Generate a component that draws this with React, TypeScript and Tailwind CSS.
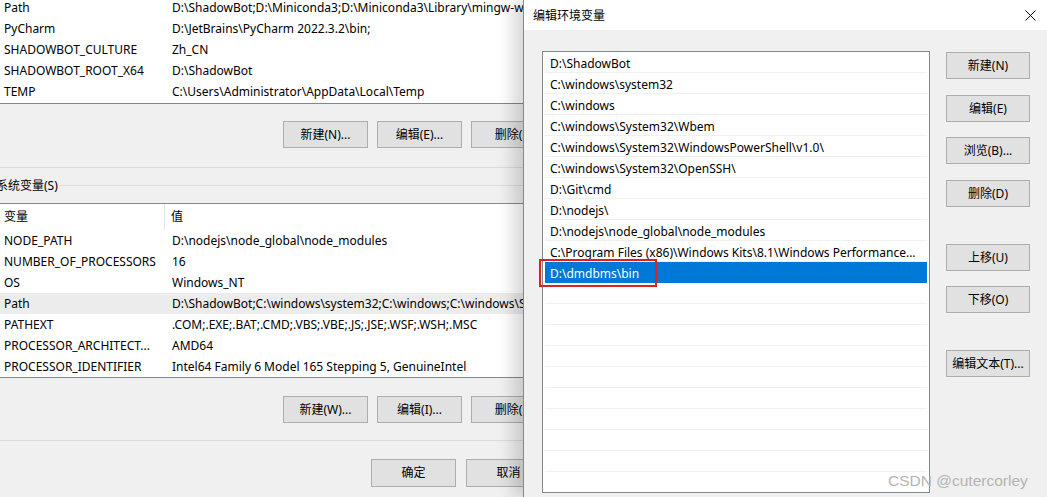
const userVars = [
  ['Path', 'D:\\ShadowBot;D:\\Miniconda3;D:\\Miniconda3\\Library\\mingw-w64\\bin;D:\\Miniconda3\\Library\\usr\\bin'],
  ['PyCharm', 'D:\\JetBrains\\PyCharm 2022.3.2\\bin;'],
  ['SHADOWBOT_CULTURE', 'Zh_CN'],
  ['SHADOWBOT_ROOT_X64', 'D:\\ShadowBot'],
  ['TEMP', 'C:\\Users\\Administrator\\AppData\\Local\\Temp'],
];

const sysVars = [
  ['NODE_PATH', 'D:\\nodejs\\node_global\\node_modules'],
  ['NUMBER_OF_PROCESSORS', '16'],
  ['OS', 'Windows_NT'],
  ['Path', 'D:\\ShadowBot;C:\\windows\\system32;C:\\windows;C:\\windows\\System32\\Wbem'],
  ['PATHEXT', '.COM;.EXE;.BAT;.CMD;.VBS;.VBE;.JS;.JSE;.WSF;.WSH;.MSC'],
  ['PROCESSOR_ARCHITECT...', 'AMD64'],
  ['PROCESSOR_IDENTIFIER', 'Intel64 Family 6 Model 165 Stepping 5, GenuineIntel'],
];

const paths = [
  'D:\\ShadowBot',
  'C:\\windows\\system32',
  'C:\\windows',
  'C:\\windows\\System32\\Wbem',
  'C:\\windows\\System32\\WindowsPowerShell\\v1.0\\',
  'C:\\windows\\System32\\OpenSSH\\',
  'D:\\Git\\cmd',
  'D:\\nodejs\\',
  'D:\\nodejs\\node_global\\node_modules',
  'C:\\Program Files (x86)\\Windows Kits\\8.1\\Windows Performance...',
  'D:\\dmdbms\\bin',
];

function Btn({ label, className = '' }: { label: string; className?: string }) {
  return (
    <div
      className={`h-[27px] shrink-0 flex items-center justify-center bg-[#e1e1e1] border border-[#adadad] text-[12px] text-black whitespace-nowrap ${className}`}
    >
      {label}
    </div>
  );
}

function VarRow({ name, value, hl = false }: { name: string; value: string; hl?: boolean }) {
  return (
    <div className={`h-[21px] flex items-center whitespace-nowrap ${hl ? 'bg-[#ececec]' : ''}`}>
      <div className="w-[172px] shrink-0 pl-[4px]">{name}</div>
      <div>{value}</div>
    </div>
  );
}

export default function App() {
  const rows = Array.from({ length: 22 }, (_, i) => paths[i] ?? '');

  return (
    <div
      className="w-[1047px] h-[497px] flex overflow-hidden bg-[#f0f0f0] text-[12px] text-black"
      style={{ fontFamily: '"Noto Sans", "Noto Sans CJK SC", sans-serif' }}
    >
      {/* Environment variables window (behind) */}
      <div className="w-[523px] shrink-0 flex flex-col overflow-hidden">
        <div className="h-[104px] shrink-0 bg-white border-b border-[#828790] overflow-hidden">
          <div className="-mt-[3px]">
            {userVars.map(([n, v]) => (
              <VarRow key={n} name={n} value={v} />
            ))}
          </div>
        </div>

        <div className="mt-[17px] pl-[283px] flex gap-[9px]">
          <Btn label="新建(N)..." className="w-[85px]" />
          <Btn label="编辑(E)..." className="w-[85px]" />
          <Btn label="删除(L)" className="w-[85px]" />
        </div>

        <div className="mt-[19px] h-px bg-[#dadada]" />

        <div className="mt-[9px] h-[17px] flex items-center -ml-[4px]">
          <span className="whitespace-nowrap">系统变量(S)</span>
          <div className="flex-1 h-px bg-[#dcdcdc] ml-[2px]" />
        </div>

        <div className="mt-[9px] bg-white border-t border-b border-[#828790]">
          <div className="h-[26px] flex items-center">
            <div className="w-[165px] shrink-0 pl-[4px] h-full flex items-center border-r border-[#e5e5e5]">变量</div>
            <div className="pl-[6px]">值</div>
          </div>
          {sysVars.map(([n, v]) => (
            <VarRow key={n} name={n} value={v} hl={n === 'Path'} />
          ))}
        </div>

        <div className="mt-[18px] pl-[283px] flex gap-[9px]">
          <Btn label="新建(W)..." className="w-[85px]" />
          <Btn label="编辑(I)..." className="w-[85px]" />
          <Btn label="删除(L)" className="w-[85px]" />
        </div>

        <div className="mt-[17px] h-px bg-[#dadada]" />

        <div className="mt-[18px] pl-[371px] flex gap-[10px]">
          <Btn label="确定" className="w-[85px] h-[28px]" />
          <Btn label="取消" className="w-[85px] h-[28px]" />
        </div>
      </div>

      {/* Edit environment variable dialog */}
      <div className="relative z-10 flex-1 flex flex-col border-l border-[#888888] bg-[#f0f0f0] shadow-[-10px_0_16px_rgba(0,0,0,0.16)]">
        <div className="h-[30px] shrink-0 bg-white flex items-center justify-between pl-[9px] pr-[11px] pt-px">
          <span>编辑环境变量</span>
          <svg width="11" height="11" viewBox="0 0 11 11" className="text-black">
            <path d="M0.5 0.5 L10.5 10.5 M10.5 0.5 L0.5 10.5" stroke="currentColor" strokeWidth="1" />
          </svg>
        </div>

        <div className="flex pl-[18px] pt-[21px]">
          <div className="relative w-[388px] h-[442px] shrink-0 bg-white border border-[#828790] overflow-hidden px-[2px]">
            {rows.map((p, i) => (
              <div
                key={i}
                className={`h-[21px] flex items-center pl-[5px] pt-[3px] whitespace-nowrap border-b ${
                  i === 10 ? 'bg-[#0078d7] text-white border-[#0078d7]' : 'border-[#f0f0f0]'
                }`}
              >
                {p}
              </div>
            ))}
          </div>

          <div className="ml-[16px] w-[84px] flex flex-col">
            <Btn label="新建(N)" className="mt-px" />
            <Btn label="编辑(E)" className="mt-[16px]" />
            <Btn label="浏览(B)..." className="mt-[15px]" />
            <Btn label="删除(D)" className="mt-[16px]" />
            <Btn label="上移(U)" className="mt-[37px]" />
            <Btn label="下移(O)" className="mt-[15px]" />
            <Btn label="编辑文本(T)..." className="mt-[37px]" />
          </div>
        </div>

        {/* red annotation box */}
        <div className="absolute left-[15px] top-[259px] w-[118px] h-[28px] border-2 border-[#e0201e]" />

        {/* watermark */}
        <div
          className="absolute left-[364px] top-[469px] text-[15.5px] text-[#b4b4b4] whitespace-nowrap"
          style={{ fontFamily: '"Liberation Sans", Arial, sans-serif' }}
        >
          CSDN @cutercorley
        </div>
      </div>
    </div>
  );
}
